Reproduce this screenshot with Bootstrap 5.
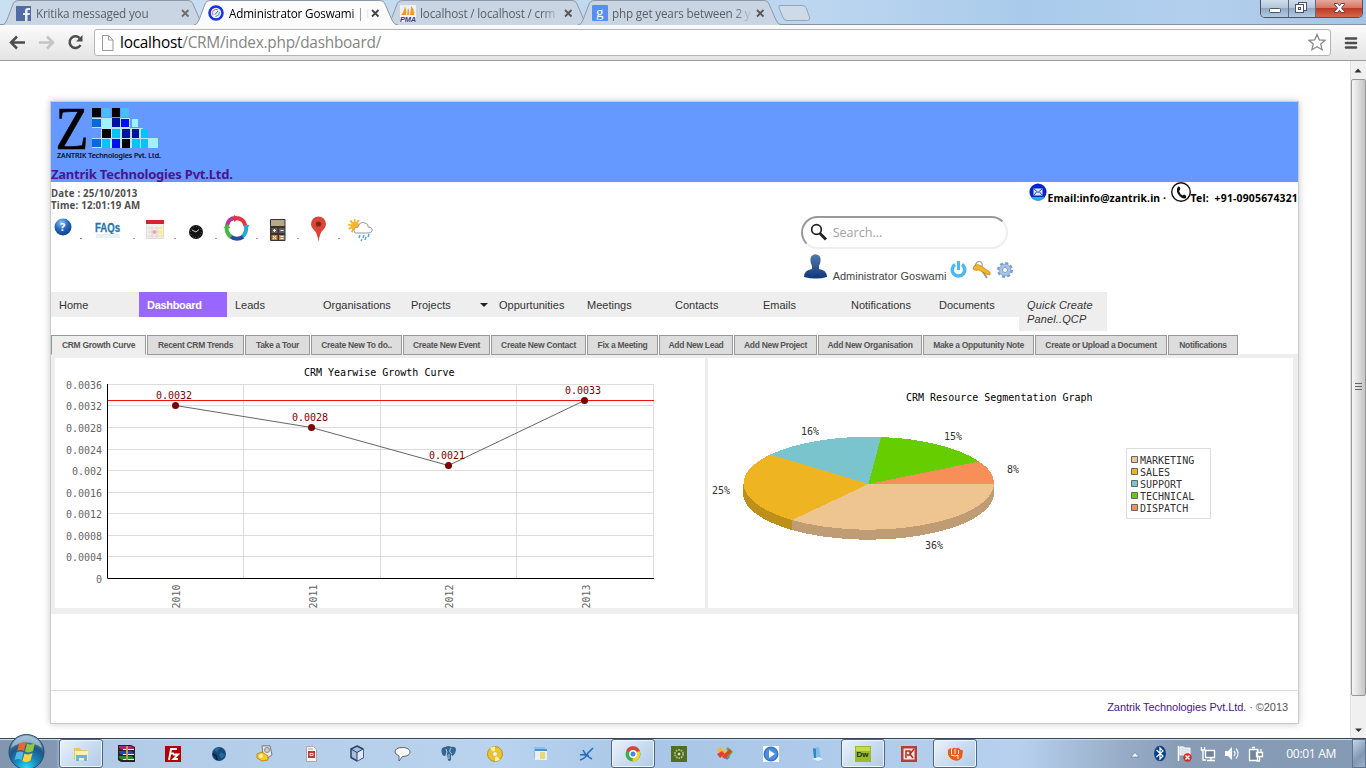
<!DOCTYPE html>
<html lang="en">
<head>
<meta charset="utf-8">
<title>Administrator Goswami | Dashboard</title>
<link rel="stylesheet" href="https://cdn.jsdelivr.net/npm/bootstrap@5.3.0/dist/css/bootstrap.min.css">
<style>
body{width:1366px;height:768px;overflow:hidden;background:#fff;font:11px/14px "Liberation Sans",Arial,sans-serif;color:#444;position:relative}
svg{display:block;flex:none}
a{text-decoration:none}
/* browser window */
.strip{height:25px;background:linear-gradient(90deg,#cbdff2 0,#bcd6f0 60%,#a9cbeb 75%,#b3cfee 88%,#a6c4e4 100%);border-bottom:1px solid #8a939e;padding-left:2px}
.wtab{display:grid;width:204px;height:25px;margin-right:-12px}
.wtab>*{grid-area:1/1}
.wtab .cap{padding:1px 0 0 14px;font:11.7px/24px "Open Sans",sans-serif;letter-spacing:-.17px;color:#5b5f66;z-index:1}
.wtab .cap span{margin-left:5px;width:142px;white-space:nowrap;-webkit-mask-image:linear-gradient(90deg,#000 86%,transparent 99%)}
.wtab.cur{z-index:2}.wtab.cur .cap{color:#000}
.ctl{width:103px;height:18px;margin-right:3px;border:1px solid #46536a;border-top:0;border-radius:0 0 5px 5px;overflow:hidden}
.ctl>div{border-right:1px solid #5d6c84;background:linear-gradient(#d0deec,#b4c6da 45%,#92a9c4 50%,#b3cae2)}
.ctl>.x{background:linear-gradient(#e3a99c,#d67562 45%,#bd3a24 50%,#d4684d);border:0}
.tools{height:36px;background:linear-gradient(#fbfbfb,#e4e4e4);border-bottom:1px solid #9c9c9c}
.addr{width:1237px;height:27px;margin-left:8px;border:1px solid #b5b5b5;border-radius:3px;background:#fff;font:15.4px/25px "Open Sans",sans-serif;color:#858585;letter-spacing:-.25px}
.addr b{font-weight:400;color:#000}
.view{height:677px}
.scroller{width:16px;background:#f0f0f0;border-left:1px solid #e3e3e3}
.thumb{height:617px;border:1px solid #989898;border-radius:2px;background:linear-gradient(90deg,#f6f6f6,#dedede 50%,#c4c4c6)}
/* page */
.sheet{width:1249px;height:623px;margin:40px 0 0 50px;border:1px solid #ccc;box-shadow:0 0 7px rgba(0,0,0,.22)}
.brandbar{height:80px;background:#69f}
.brandbar h1{font:700 13px/17px "Noto Sans",sans-serif;color:#4b1491;margin:0;letter-spacing:-.22px}
.band{height:110px;font-family:"Noto Sans",sans-serif}
.stamp{font-weight:700;font-size:9.7px;line-height:12px;padding-top:6px;height:30px;color:#505050;letter-spacing:.2px}
.reach{font-weight:700;font-size:10.4px;line-height:14px;color:#000;white-space:nowrap;height:24px}
.reach span{padding-top:9px;letter-spacing:.1px}
.reach .tel{letter-spacing:.2px}
.find{width:207px;height:33px;border:2px solid #999;border-color:#999 #eee #eee #999;border-radius:17px;font:12.6px/30px "Open Sans",sans-serif;color:#a3a3a3;margin-top:34px}
.who{font:11px/14px "Liberation Sans",sans-serif;color:#444;height:32px}
.menu{height:43px}
.menu a{width:88px;height:25px;background:#eee;color:#333;padding:6px 8px 0}
.menu a.on{background:#96f;color:#fff;font-weight:700;letter-spacing:-.3px}
.menu a.qcp{height:39px;font-style:italic;letter-spacing:.13px}
.subtabs{height:19px}
.subtabs a{height:20px;border:1px solid #999;background:#ddd;color:#555;font-weight:700;font-size:8.5px;letter-spacing:-.3px;line-height:18px;text-align:center;margin-right:1px;white-space:nowrap;flex:none}
.subtabs a.on{background:#eee;border-bottom-color:#eee}
.board{height:260px;background:#eee;padding:4px 5px 6px 4px}
.board svg{background:#fff;font:10px "DejaVu Sans Mono",monospace}
.foot{height:32px;border-top:1px solid #ddd;margin-top:76px;padding:9px 10px 0 0;color:#555;letter-spacing:-.07px}
.foot a{color:#4b1491}
/* desktop taskbar */
.tbar{height:30px;border-top:1px solid #36455a;background:linear-gradient(90deg,#8196af 0,#8398b2 56px,#b1cae6 62px,#b9d3ef 500px,#a9c6e7 650px,#b6d0ee 1020px,#98aec8 1120px,#889cb6 1180px,#8499b3 100%);position:relative;padding-left:58px;box-shadow:inset 0 1px #c8ddf3}
.slot{width:46px;height:29px;padding:0 1px}
.slot.open>div{background:linear-gradient(135deg,#e9f2fb,#c6d9ee 60%,#b3cce8);border:1px solid #52657d;border-radius:3px;box-shadow:inset 0 0 0 1px #edf5fd}
.slot>div{width:44px;height:29px;padding-right:1px}
.orb{position:absolute;left:7px;top:-6px}
.clock{font:12.1px/29px "Open Sans",sans-serif;color:#fff;letter-spacing:-.35px}
.desk{width:14px;height:29px;border:1px solid #5f738c;background:linear-gradient(135deg,#c4d4e5,#8198b3 60%,#9db2ca)}
</style>
</head>
<body class="d-flex flex-column">
<svg width="0" height="0" class="position-absolute">
<defs>
<path id="tabshape" d="M0 25 Q3 25 5 20 L11 4 Q12 .5 16 .5 H186 Q190 .5 191 4 L198 20 Q200 25 204 25"/>
<path id="cross" d="M1 1 L7.500 7.500 M7.500 1 L1 7.500" stroke-width="1.800" fill="none"/>
<radialGradient id="gb" cx=".4" cy=".25" r=".8"><stop offset="0" stop-color="#8dc0f5"/><stop offset=".5" stop-color="#2668bd"/><stop offset="1" stop-color="#0b3e8d"/></radialGradient>
<linearGradient id="usr" x2="0" y2="1"><stop offset="0" stop-color="#5279ac"/><stop offset="1" stop-color="#10387a"/></linearGradient>
<radialGradient id="orbg" cx=".5" cy=".95" r=".95"><stop offset="0" stop-color="#2fd6fa"/><stop offset=".35" stop-color="#1787bb"/><stop offset=".65" stop-color="#1d5687"/><stop offset="1" stop-color="#8fb3cc"/></radialGradient>
</defs>
</svg>

<header class="strip d-flex">
  <div class="wtab"><svg width="204" height="25"><use href="#tabshape" fill="#cad5e3" stroke="#8d98a8"/></svg>
    <div class="cap d-flex align-items-center"><svg width="15" height="15"><path fill="#3b5998" opacity=".85" d="M0 0h15v15H0z"/><path fill="#e8edf5" d="M9 15V9H7V7h2V5q0-3 3-3h2v2h-1.500q-1 0-1 1v2H14l-.4 2h-2.100v6z"/></svg><span>Kritika messaged you</span><svg width="9" height="9" style="margin-left:3px"><use href="#cross" stroke="#6c6c6c"/></svg></div></div>
  <div class="wtab cur"><svg width="204" height="25"><use href="#tabshape" fill="#fbfbfb" stroke="#8d98a8"/></svg>
    <div class="cap d-flex align-items-center"><svg width="16" height="16"><circle cx="8" cy="8" r="6.500" fill="#dff4f5" stroke="#1b30e0" stroke-width="2.500"/><path d="M5 10a3.600 3.600 0 0 1 5-5" stroke="#d0608a" fill="none"/><path d="M11.500 7q0 4-4 4.500" stroke="#3ea0a0" fill="none"/><path d="M7 9.500l3-3.500" stroke="#4466cc"/></svg><span>Administrator Goswami | D</span><svg width="9" height="9" class="ms-0"><use href="#cross" stroke="#444"/></svg></div></div>
  <div class="wtab"><svg width="204" height="25"><use href="#tabshape" fill="#cad5e3" stroke="#8d98a8"/></svg>
    <div class="cap d-flex align-items-center"><svg width="16" height="17"><path fill="#eef1f6" d="M0 0h16v17H0z"/><path fill="#f59a1c" d="M5 1Q7 6 6 10H1Q4 7 5 1M8 3Q10 6 9 10H7zM11 1q4 4 3 9h-4q1-5 1-9"/><text x="0" y="16.500" textLength="16" lengthAdjust="spacingAndGlyphs" font-family="Liberation Sans" font-size="7" font-weight="700" font-style="italic" fill="#3d3a78">PMA</text></svg><span style="margin-left:4px">localhost / localhost / crm</span><svg width="9" height="9" style="margin-left:2px"><use href="#cross" stroke="#555"/></svg></div></div>
  <div class="wtab"><svg width="204" height="25"><use href="#tabshape" fill="#cad5e3" stroke="#8d98a8"/></svg>
    <div class="cap d-flex align-items-center"><svg width="16" height="16"><rect width="16" height="16" rx="1" fill="#5a8df0"/><text x="4" y="11.500" font-family="Liberation Serif" font-size="15" fill="#fff">g</text></svg><span style="margin-left:4px">php get years between 2 y</span><svg width="9" height="9" style="margin-left:2px"><use href="#cross" stroke="#555"/></svg></div></div>
  <svg width="34" height="25" class="ms-2"><path d="M1 8q-1-3 2-2.500h21q3 0 4 2l3.500 9.500q1 3-2 3.500H9q-3 0-4-3z" fill="#cfdae8" stroke="#95a3b7"/></svg>
  <div class="ctl d-flex ms-auto">
    <div style="width:28px"><svg width="28" height="18"><rect x="8.500" y="8.500" width="11" height="4" rx="1" fill="#fff" stroke="#4a556b"/></svg></div>
    <div style="width:27px"><svg width="27" height="18" fill="#fff" stroke="#4a556b"><rect x="9.500" y="2.500" width="8" height="8"/><rect x="6.500" y="4.500" width="8" height="8"/><rect x="9.500" y="7.500" width="2" height="2"/></svg></div>
    <div class="x flex-grow-1"><svg width="47" height="18"><path d="M18.500 3.500h3l2 2.300 2-2.300h3v1L25.500 8l3 3.500v1h-3l-2-2.300-2 2.300h-3v-1l3-3.500-3-3.500z" fill="#fff" stroke="#5e3f4a"/></svg></div>
  </div>
</header>

<div class="tools d-flex align-items-center">
  <svg width="86" height="35" fill="none" stroke-width="2.500"><path d="M25 17.500H11.500M17 11.500l-6 6 6 6" stroke="#4d4d4d"/><path d="M39 17.500h13M47 11.500l6 6-6 6" stroke="#c4c4c4"/><path d="M80.500 20A5.800 5.800 0 1 1 79.500 13" stroke="#4d4d4d"/><path d="M82.500 10v6.500H76z" fill="#4d4d4d"/></svg>
  <div class="addr d-flex align-items-center">
    <svg width="25" height="25"><path d="M7.500 5.500h6l4.500 4.500v10.500H7.500zM13.500 5.500V10H18" fill="#fcfcfc" stroke="#999"/></svg>
    <div><b>localhost</b>/CRM/index.php/dashboard/</div>
    <svg width="20" height="20" class="ms-auto" style="margin-right:2px"><path d="M9 1.500l2.300 5.300 5.800.5-4.400 3.800 1.400 5.600L9 13.800l-5.100 2.900 1.400-5.600L.9 7.300l5.800-.5z" fill="#fff" stroke="#8a8a8a" stroke-width="1.300"/></svg>
  </div>
  <svg width="14" height="14" class="ms-auto me-2" stroke="#4d4d4d" stroke-width="2.600" stroke-linecap="round"><path d="M2 2.500h10M2 7h10M2 11.500h10"/></svg>
</div>

<div class="view d-flex justify-content-between">
<main class="sheet">
  <div class="brandbar">
    <svg width="115" height="64" viewBox="51 102 115 64">
      <text x="55.500" y="149" font-family="Liberation Serif" font-size="61" stroke="#000" stroke-width=".6" textLength="33" lengthAdjust="spacingAndGlyphs">Z</text>
      <path fill="#b9e4ff" d="M92 118h38v10h13v10h15v10H92v-10h9v-10h-9z"/>
      <path fill="#000" d="M92 108h9v9h-9zM112 108h8v9h-8zM102 129h9v9h-9zM122 139h8v9h-8z"/>
      <path fill="#4bbcf7" d="M102 108h8v9h-8zM121 108h8v9h-8z"/><path fill="#0868dc" d="M92 119h9v8h-9zM92 139h9v8h-9z"/>
      <path fill="#99f5ff" d="M103 119h7v8h-7zM132 119h6v8h-6zM151 140h7v7h-7z"/><path fill="#00119a" d="M112 118h8v9h-8zM122 129h8v9h-8zM132 129h7v9h-7z"/>
      <path fill="#0010f2" d="M121 119h8v8h-8zM112 139h8v9h-8z"/><path fill="#00c4fa" d="M112 129h8v9h-8zM141 129h7v9h-7zM102 139h8v9h-8zM132 139h8v9h-8zM141 139h7v9h-7z"/>
      <text x="57" y="158" font-family="Noto Sans" font-size="6.300" font-weight="400" stroke="#000" stroke-width=".15" textLength="104" lengthAdjust="spacingAndGlyphs">ZANTRIK Technologies Pvt. Ltd.</text>
    </svg>
    <h1>Zantrik Technologies Pvt.Ltd.</h1>
  </div>

  <div class="band d-flex">
    <div style="width:750px">
      <div class="stamp">Date : 25/10/2013<br>Time: 12:01:19 AM</div>
      <div class="d-flex">
        <svg width="34" height="33" viewBox="51 212 34 33"><circle cx="63" cy="227" r="8.500" fill="url(#gb)"/><text x="60" y="231" font-size="11" font-weight="700" fill="#fff">?</text><path d="M80 238.500h2" stroke="#6688aa"/></svg>
        <svg width="55" height="33" viewBox="85 212 55 33"><text x="95" y="232" font-family="Liberation Sans" font-size="12" font-weight="700" fill="#2474ac" stroke="#2474ac" stroke-width=".3" textLength="25" lengthAdjust="spacingAndGlyphs">FAQs</text><path fill="#e6f0f7" d="M96 234h24v4H96z"/><path d="M133 238.500h2" stroke="#b98"/></svg>
        <svg width="40" height="33" viewBox="140 212 40 33"><path fill="#f1eeec" stroke="#ddd" d="M146.500 220.500h17v18h-17z"/><path fill="#d4242c" d="M146 220h18v4h-18z"/><path fill="#fff3a8" d="M159 226h4v11h-4z"/><path d="M148 228h14M148 232h14M148 236h14M152 226v12M157 226v12" stroke="#d3cecc" stroke-width=".6"/><circle cx="154.500" cy="232" r="2" fill="#f2a3a3"/><path d="M174 238.500h2" stroke="#b98"/></svg>
        <svg width="40" height="33" viewBox="180 212 40 33"><circle cx="196" cy="232" r="7" fill="#111"/><circle cx="196" cy="232" r="5.500" fill="none" stroke="#777" stroke-dasharray=".8 2"/><path d="M192 230l4 2 3-2.500" stroke="#ccc" fill="none"/><path d="M215 238.500h2" stroke="#b98"/></svg>
        <svg width="40" height="33" viewBox="220 212 40 33"><g fill="none" stroke-width="4"><path d="M227 226q1-8 9-8" stroke="#b93494"/><path d="M235 218q9 0 10.500 8" stroke="#e2343f"/><path d="M246 226q1 7-4 11" stroke="#28a8dc"/><path d="M243 237q-7 4-13-1" stroke="#244d9c"/><path d="M231 237q-6-5-4-12" stroke="#49b84a"/></g><path d="M234 215l5 3-5 4z" fill="#e2343f"/><path d="M243 225h6.500l-3 5z" fill="#28a8dc"/><path d="M223.500 228l4-4 3 4z" fill="#49b84a"/><path d="M256 238.500h2" stroke="#b98"/></svg>
        <svg width="40" height="33" viewBox="260 212 40 33"><rect x="270" y="219" width="15.500" height="22" rx="1" fill="#37322e"/><path fill="#b5a98c" d="M271 220h13.500v6H271z"/><path fill="#695e54" d="M271.500 228h6v5h-6zM279 228h5.500v5H279z"/><path fill="#e17c1e" d="M271.500 235h6v5h-6zM279 235h5.500v5H279z"/><path d="M273 230.500h3M274.500 229v3M280.500 230.500h3M273 236l3 3M276 236l-3 3M280.500 236.500h3M280.500 238.500h3" stroke="#fff"/><path d="M297 238.500h2" stroke="#b98"/></svg>
        <svg width="42" height="33" viewBox="300 212 42 33"><path d="M318.500 242q-1-9-5-12.500a7.500 7.500 0 1 1 10 0q-4 3.500-5 12.500" fill="#db4437"/><circle cx="318.500" cy="224" r="2.600" fill="#7c231c"/><path d="M338 238.500h2" stroke="#b98"/></svg>
        <svg width="38" height="33" viewBox="341 212 38 33"><circle cx="354" cy="226" r="5.500" fill="none" stroke="#f5a81c" stroke-width="3" stroke-dasharray="1.500 1.950"/><circle cx="354" cy="226" r="4.500" fill="#fbb52b"/><path d="M354 233q-3-5 3-6 2-6 7-4 4 1 3 4 5 0 4 4-1 2-3 2z" fill="#fdfdfd" stroke="#9a9a9a"/><path d="M359 235l-1 3M363 235l-1 3M368 234l-1 3M361 239l-1 2M365 237l-1 3" stroke="#52a7d8" stroke-width="1.500"/></svg>
      </div>
    </div>
    <div style="width:228px">
      <div class="find d-flex align-items-center">
        <svg width="30" height="29"><circle cx="13.500" cy="11.500" r="4.800" fill="#fff" stroke="#222" stroke-width="1.700"/><path d="M17 15.500l6 6" stroke="#222" stroke-width="3"/></svg>Search...
      </div>
      <div class="who d-flex">
        <svg width="32" height="33" viewBox="801 249 32 33"><path d="M804 277q0-7 8-8v-3q-3-6-.5-10 4-3.500 8 0 2.500 4-.5 10v3q8 1 8 8-11 3-23 0" fill="url(#usr)"/></svg>
        <span style="padding-top:20px;width:114px">Administrator Goswami</span>
        <svg width="70" height="33" viewBox="947 249 70 33"><path d="M955 264.500a6.300 6.300 0 1 0 7 0" fill="none" stroke="#4ab8f3" stroke-width="3.600"/><path d="M958.500 261v9" stroke="#4ab8f3" stroke-width="3"/><ellipse cx="979" cy="265.500" rx="3.300" ry="4" transform="rotate(25 979 265)" fill="none" stroke="#9a9a9a" stroke-width="1.200"/><path d="M981 269l6 9" stroke="#9a9a9a" stroke-width="2"/><path d="M974 266q4-3 7 0l9 6v3l-4-1-7-4q-4 1-6-1z" fill="#f6b62b" stroke="#b77b18" stroke-width=".7"/><circle cx="1005" cy="270" r="6.700" fill="none" stroke="#7b9fca" stroke-width="2.600" stroke-dasharray="3 2.260"/><circle cx="1005" cy="270" r="4.300" fill="#fff" stroke="#a5c3e6" stroke-width="3.200"/><circle cx="1005" cy="270" r="2.500" fill="#fff" stroke="#6e94c6"/><circle cx="1005" cy="270" r="6" fill="none" stroke="#7b9fca" stroke-width=".8"/></svg>
      </div>
    </div>
    <div class="reach d-flex">
      <svg width="19" height="22" viewBox="1029 182 19 22"><circle cx="1038" cy="192" r="8.600" fill="#0826c8"/><path d="M1031 197a8.500 8.500 0 0 0 14 0z" fill="#2ba7ef"/><path d="M1033.500 188.500h9v7h-9z" fill="#dbe9ff"/><path d="M1033.500 188.500l4.500 4 4.500-4M1033.500 195.500l3-3.500M1042.500 195.500l-3-3.500" fill="none" stroke="#1746cc"/></svg>
      <span style="width:123px">Email:info@zantrik.in&nbsp;·</span>
      <svg width="20" height="22" viewBox="1171 182 20 22"><circle cx="1181" cy="192" r="9.300" fill="#fff" stroke="#111" stroke-width="1.400"/><path d="M1178 186.500q3 0 2 3.500l-1 1q1 3 3.500 4.500l1.500-1q3 1 2 3.500-3 1.500-6-1.500-5-5-2-10" fill="#111"/></svg>
      <span class="tel">Tel:&nbsp; +91-0905674321</span>
    </div>
  </div>

  <nav class="menu d-flex align-items-start">
    <a href="#">Home</a><a href="#" class="on">Dashboard</a><a href="#">Leads</a><a href="#">Organisations</a><a href="#" class="d-flex justify-content-between" style="padding-right:3px">Projects<svg width="8" height="14"><path d="M0 5h8L4 9z" fill="#222"/></svg></a><a href="#">Oppurtunities</a><a href="#">Meetings</a><a href="#">Contacts</a><a href="#">Emails</a><a href="#">Notifications</a><a href="#">Documents</a><a href="#" class="qcp">Quick Create Panel..QCP</a>
  </nav>

  <div class="subtabs d-flex">
    <a href="#" class="on" style="width:95px">CRM Growth Curve</a><a href="#" style="width:97px">Recent CRM Trends</a><a href="#" style="width:65px">Take a Tour</a><a href="#" style="width:91px">Create New To do..</a><a href="#" style="width:87px">Create New Event</a><a href="#" style="width:95px">Create New Contact</a><a href="#" style="width:71px">Fix a Meeting</a><a href="#" style="width:74px">Add New Lead</a><a href="#" style="width:83px">Add New Project</a><a href="#" style="width:104px">Add New Organisation</a><a href="#" style="width:111px">Make a Opputunity Note</a><a href="#" style="width:132px">Create or Upload a Document</a><a href="#" style="width:70px">Notifications</a>
  </div>

  <div class="board d-flex justify-content-between">
    <svg width="650" height="250" viewBox="55 358 650 250">
      <path d="M108 384.500h546M108 405.500h546M108 427.500h546M108 449.500h546M108 470.500h546M108 492.500h546M108 513.500h546M108 535.500h546M108 556.500h546M243.500 384v194M380.500 384v194M516.500 384v194M653.500 384v194" stroke="#dcdcdc"/>
      <path d="M108 400.500h546" stroke="#e11"/>
      <path d="M107.500 384v194.500H654" fill="none" stroke="#000"/>
      <path d="M175.500 405.500l136 22 137 38 136-65" fill="none" stroke="#666"/>
      <g fill="#800000"><circle cx="175.500" cy="405.500" r="3.500"/><circle cx="311.500" cy="427.500" r="3.500"/><circle cx="448.500" cy="465.500" r="3.500"/><circle cx="584.500" cy="400.500" r="3.500"/>
      <text x="156" y="399">0.0032</text><text x="292" y="421">0.0028</text><text x="429" y="459">0.0021</text><text x="565" y="394">0.0033</text></g>
      <g fill="#666" text-anchor="end"><text x="102" y="389">0.0036</text><text x="102" y="410">0.0032</text><text x="102" y="432">0.0028</text><text x="102" y="454">0.0024</text><text x="102" y="475">0.002</text><text x="102" y="497">0.0016</text><text x="102" y="518">0.0012</text><text x="102" y="540">0.0008</text><text x="102" y="561">0.0004</text><text x="102" y="583">0</text></g>
      <g fill="#666"><text transform="translate(180 608.500) rotate(-90)">2010</text><text transform="translate(317 608.500) rotate(-90)">2011</text><text transform="translate(453 608.500) rotate(-90)">2012</text><text transform="translate(590 608.500) rotate(-90)">2013</text></g>
      <text x="304" y="376">CRM Yearwise Growth Curve</text>
    </svg>
    <svg width="585" height="250" viewBox="708 358 585 250">
      <g shape-rendering="crispEdges">
      <path fill="#bf9c74" d="M994 484v10a125.500 46.500 0 0 1-202 36v-10z"/>
      <path fill="#bf9019" d="M743 484v10a125.500 46.500 0 0 0 49 36v-10z"/>
      <path fill="#eec591" d="M868.500 484H994a125.500 46.500 0 0 1-202 36z"/>
      <path fill="#eeb422" d="M868.500 484L792 520a125.500 46.500 0 0 1-21.500-65.500z"/>
      <path fill="#7ac5cd" d="M868.500 484l-98-29.500A125.500 47 0 0 1 881 437z"/>
      <path fill="#66cd00" d="M868.500 484L881 437a125.500 47 0 0 1 98 24.500z"/>
      <path fill="#f98f58" d="M868.500 484L979 461.500Q994 471 994 484z"/></g>
      <text x="906" y="401">CRM Resource Segmentation Graph</text>
      <g fill="#333"><text x="801" y="435">16%</text><text x="944" y="440">15%</text><text x="1007" y="473">8%</text><text x="712" y="494">25%</text><text x="925" y="549">36%</text>
      <text x="1140" y="464">MARKETING</text><text x="1140" y="476">SALES</text><text x="1140" y="488">SUPPORT</text><text x="1140" y="500">TECHNICAL</text><text x="1140" y="512">DISPATCH</text></g>
      <path d="M1126.500 448.500h84v70h-84z" fill="none" stroke="#dcdcdc"/>
      <g stroke="#666"><path fill="#eec591" d="M1131.500 456.500h6v6h-6z"/><path fill="#eeb422" d="M1131.500 468.500h6v6h-6z"/><path fill="#7ac5cd" d="M1131.500 480.500h6v6h-6z"/><path fill="#66cd00" d="M1131.500 492.500h6v6h-6z"/><path fill="#f98f58" d="M1131.500 504.500h6v6h-6z"/></g>
    </svg>
  </div>
  <footer class="foot text-end"><a href="#">Zantrik Technologies Pvt.Ltd.</a> · ©2013</footer>
</main>
<aside class="scroller">
  <svg width="15" height="18"><path d="M3.500 11.500h7L7 7.500z" fill="#333"/></svg>
  <div class="thumb d-flex align-items-center justify-content-center"><svg width="7" height="9" stroke="#666"><path d="M0 .5h7M0 3.500h7M0 6.500h7"/></svg></div>
  <svg width="15" height="42"><path d="M4 32.500h7L7.500 36z" fill="#333"/></svg>
</aside>
</div>

<footer class="tbar d-flex">
  <svg class="orb" width="38" height="36" viewBox="0 0 38 36"><circle cx="19.500" cy="19" r="17.500" fill="url(#orbg)" stroke="#274c6b"/><path d="M4 15q15-11 31 0A16 16 0 0 0 4 15" fill="#c6d8e4" opacity=".6"/><path fill="#ee6429" d="M12 11q4-3 7-1l-2 8q-3-2-7 0z"/><path fill="#91c73e" d="M20 10.500q4 2 8-.5l-2 8q-4 2.500-8 .5z"/><path fill="#52b5e8" d="M9.500 19.500q4-2 7 0l-2 7.500q-3-2-7 0z"/><path fill="#fdd13a" d="M17.500 20.500q4 2 8-.5l-2 7.500q-4 2.500-8 .5z"/></svg>
  <div class="slot open"><div class="d-flex align-items-center justify-content-center"><svg width="16" height="16"><path fill="#e9c65f" d="M1 2h6l1 2h6v10H1z"/><path fill="#fff0ae" d="M2 5h13v9H2z"/><path fill="#66b5e5" d="M3 9h11v6h-3v-3H6v3H3z"/></svg></div></div>
  <div class="slot"><div class="d-flex align-items-center justify-content-center"><svg width="17" height="17"><path fill="#222" d="M0 0h13l4 2v15H3l-3-2z"/><path fill="#a8257c" d="M1 1h12l3 2v2H4L1 3z"/><path fill="#2a45b0" d="M1 6h12l3 2v2H4L1 8z"/><path fill="#218a37" d="M1 11h12l3 2v2H4l-3-2z"/><path d="M5 4.500h11M5 9.500h11M5 14.500h11" stroke="#eee"/><path fill="#c39a4b" d="M8 1h2v14H8z"/></svg></div></div>
  <div class="slot"><div class="d-flex align-items-center justify-content-center"><svg width="16" height="16"><path fill="#b30000" d="M0 0h16v16H0z"/><path d="M4 14L6 3h6M5 7.500h4M8 8.500h5L8.500 13H13" fill="none" stroke="#fff" stroke-width="1.900"/></svg></div></div>
  <div class="slot"><div class="d-flex align-items-center justify-content-center"><svg width="16" height="16"><circle cx="8" cy="8" r="7" fill="#174a79"/><path d="M3 4q3-3 6-2l-3 4zM10 6l4 3-3 4-3-4z" fill="#2a6a98"/><path d="M2 8q4 1 4 6" stroke="#0b2448" fill="none" stroke-width="2"/></svg></div></div>
  <div class="slot"><div class="d-flex align-items-center justify-content-center"><svg width="17" height="17"><path d="M6 .8h8l2 9-4 3-5-3z" fill="#e9e9e9" stroke="#777"/><circle cx="11" cy="5" r="2.500" fill="#ccc" stroke="#888"/><path d="M1 9l5-2 6 4v4l-6 1-5-3z" fill="#f6c92d" stroke="#c18b12"/><circle cx="5" cy="11" r="2" fill="#fff3a5"/></svg></div></div>
  <div class="slot"><div class="d-flex align-items-center justify-content-center"><svg width="16" height="16"><path d="M3.500.5h7l3 3v12h-10z" fill="#f7f1ef" stroke="#ada7a7"/><path d="M5 3h5" stroke="#aaa"/><path fill="#bf3b37" d="M5 5h7v7H5z"/><path d="M7 7.500h3v2H7z" fill="none" stroke="#ffd8d4"/></svg></div></div>
  <div class="slot"><div class="d-flex align-items-center justify-content-center"><svg width="16" height="17"><path d="M8 1l6 3v8.500L8 16l-6-3.500V4z" fill="#a5bfdc" stroke="#26416b" stroke-width="1.500"/><path d="M8 8v8l6-3.500V4z" fill="#dde9f5"/><path d="M2 4l6 3.500L14 4M8 7.500V16" fill="none" stroke="#26416b"/></svg></div></div>
  <div class="slot"><div class="d-flex align-items-center justify-content-center"><svg width="17" height="16"><path d="M8.500 1.500c10 0 10 9 0 9L5 15V10q-4-2-4-4 0-4.500 7.500-4.500" fill="#f8f8f8" stroke="#606060"/></svg></div></div>
  <div class="slot"><div class="d-flex align-items-center justify-content-center"><svg width="17" height="17"><path d="M2 9Q0 2 5 2q4-2 6 0 5-1 5 3-1 5-4 6l-1-2v6q-2 2-3 0l-1-6q-3 4-5 0" fill="#336791"/><path d="M6 4q2 3 0 6M11 3q-3 4 1 6M9 9v5" stroke="#b4cde6" fill="none"/></svg></div></div>
  <div class="slot"><div class="d-flex align-items-center justify-content-center"><svg width="16" height="16"><circle cx="8" cy="8" r="7.500" fill="#e9c42c" stroke="#bd9420"/><path d="M8 8L3 2a8 8 0 0 1 5-1.500zM8 8l5 6-5 1.500z" fill="#fff09a"/><circle cx="8" cy="8" r="2.500" fill="#eef" stroke="#d8bb48"/></svg></div></div>
  <div class="slot"><div class="d-flex align-items-center justify-content-center"><svg width="16" height="16"><path fill="#8bc1e9" d="M1 1h11v11H1z"/><path fill="#e9f1f4" d="M2 4h12v10H2z"/><path fill="#4a90cf" d="M2 3h12v2H2z"/><path fill="#ecd777" d="M7 6h5v7H7z"/></svg></div></div>
  <div class="slot"><div class="d-flex align-items-center justify-content-center"><svg width="16" height="16" fill="none" stroke="#276fbb" stroke-width="1.600"><path d="M1 14q6-2 8-7l5-5M4 4q3 6 9 9M1 9q4-1 9 1"/></svg></div></div>
  <div class="slot open"><div class="d-flex align-items-center justify-content-center"><svg width="16" height="16"><circle cx="8" cy="8" r="7.500" fill="#3cae4c"/><path d="M8 8L1.300 4.500A7.500 7.500 0 0 1 15 5H8" fill="#de4435"/><path d="M8 8l6.500-3a7.500 7.500 0 0 1-7 10.500z" fill="#f9ce2e"/><circle cx="8" cy="8" r="3.200" fill="#4488ed" stroke="#fff" stroke-width="1.400"/></svg></div></div>
  <div class="slot"><div class="d-flex align-items-center justify-content-center"><svg width="16" height="16"><path fill="#526e22" d="M0 0h16v16H0z"/><circle cx="8" cy="8" r="4" fill="#45611c" stroke="#a9bd75" stroke-width="2" stroke-dasharray="1.700 .8"/><circle cx="8" cy="8" r="1.500" fill="#d6e1ad"/></svg></div></div>
  <div class="slot"><div class="d-flex align-items-center justify-content-center"><svg width="18" height="15"><path d="M1 4l3-3 6 5-4 4z" fill="#f5ba32"/><path d="M1 8l3 4 5-4-3-3z" fill="#e2422c"/><path d="M7 10l4 4 3-3-3-5z" fill="#408ccb"/><path d="M12 1l5 5-5 6-3-3 3-4-2-2z" fill="#67ae3c"/><path d="M6 11l7-8 3 2-7 8z" fill="#e2422c"/></svg></div></div>
  <div class="slot"><div class="d-flex align-items-center justify-content-center"><svg width="16" height="16"><path fill="#fff" d="M0 0h16v16H0z"/><circle cx="8" cy="8" r="7.500" fill="#3476cc"/><circle cx="8" cy="8" r="6" fill="#4a8fe0"/><path d="M6 4l6 4-6 4z" fill="#fff"/></svg></div></div>
  <div class="slot"><div class="d-flex align-items-center justify-content-center"><svg width="16" height="16"><path fill="#7ebcea" d="M4 2l6-1 2 12-7-1z"/><path fill="#2f86c9" d="M4 2l3 1v10l-2-1z"/><path d="M3 13l6 2 5-2-4-2z" fill="#e3f1fb"/></svg></div></div>
  <div class="slot open"><div class="d-flex align-items-center justify-content-center"><svg width="16" height="16"><path fill="#99bb28" d="M0 0h16v16H0z"/><path fill="#c4dc4b" d="M1 1h14v4H1z"/><text x="1.500" y="11" font-size="8" font-weight="700" fill="#203109">Dw</text></svg></div></div>
  <div class="slot"><div class="d-flex align-items-center justify-content-center"><svg width="16" height="16"><path fill="#b93c37" d="M0 0h16v16H0z"/><path d="M2.500 2.500h11v11h-11z" fill="#f9e4df"/><path d="M5 12V5h4v4H6M9 8l4-5M9 8l3 4" fill="none" stroke="#ad302a" stroke-width="1.500"/></svg></div></div>
  <div class="slot open"><div class="d-flex align-items-center justify-content-center"><svg width="16" height="16"><path d="M1 4q2-3 4-1 2-2 4-.5 3-2 4 1l3 1-1 7q-3 4-7 3-5-1-7-6z" fill="#ec5a1c"/><path d="M4.500 3v5M8 3v5M11.500 4v4M4 9q5 2 7 0v4" stroke="#fff3e2" fill="none"/></svg></div></div>
  <svg width="142" height="29" viewBox="1128 739 142 29" class="ms-auto">
    <path d="M1131 757l4-4.500 4 4.500z" fill="#eef3f8" stroke="#516379" stroke-width=".5"/>
    <ellipse cx="1160" cy="753.500" rx="6" ry="7.700" fill="#0b4384"/><path d="M1156.500 750l6.500 6-3 3v-11l3 3-6.500 6" fill="none" stroke="#fff" stroke-width="1.200"/>
    <path d="M1178.500 746v15" stroke="#fff" stroke-width="1.500"/><path d="M1180 747q3-1 5 1h5v8h-5q-2-2-5-1z" fill="#dce3ea" stroke="#f9fbfd"/><circle cx="1187.500" cy="757.500" r="4.200" fill="#dd271c"/><path d="M1185.500 755.500l4 4M1189.500 755.500l-4 4" stroke="#fff" stroke-width="1.400"/>
    <path d="M1205.500 750.500h9v7h-9zM1207 760.500h8M1211 758v2M1201.500 747v3h3v-3M1203 750v10h3" fill="#6e8299" stroke="#fff" stroke-width="1.400"/>
    <path d="M1225 751h3l4-4v13l-4-4h-3z" fill="#fff"/><path d="M1234 751q2 2.500 0 5M1236 748.500q4 5 0 10" fill="none" stroke="#eef3f8" stroke-width="1.300"/>
    <path d="M1249.500 749.500h8v11h-8zM1252 747.500h3M1256.500 752.500h6v4h-6zM1258 749v3M1261 749v3M1259.500 757v4h-3" fill="#71859b" stroke="#fff" stroke-width="1.300"/>
  </svg>
  <div class="clock text-end" style="width:66px">00:01 AM</div>
  <div class="desk" style="margin-left:16px"></div>
</footer>
<script src="https://cdn.jsdelivr.net/npm/bootstrap@5.3.0/dist/js/bootstrap.bundle.min.js"></script>
</body>
</html>
